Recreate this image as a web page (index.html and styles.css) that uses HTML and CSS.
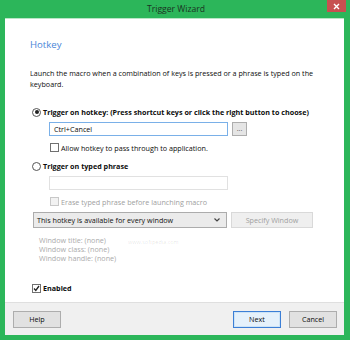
FILE: index.html
```html
<!DOCTYPE html>
<html lang="en">
<head>
  <meta charset="UTF-8">
  <title>Trigger Wizard</title>
  <link rel="stylesheet" href="styles.css">
</head>
<body>
  <div class="window">
    <div class="titlebar">
      <span class="title">Trigger Wizard</span>
      <div class="close">
        <svg width="7" height="7" viewBox="0 0 7 7"><path d="M1 1L6 6M6 1L1 6" stroke="#fff" stroke-width="1.4"/></svg>
      </div>
    </div>

    <div class="content">
      <div class="heading">Hotkey</div>
      <p class="intro">Launch the macro when a combination of keys is pressed or a phrase is typed on the keyboard.</p>

      <!-- Hotkey trigger -->
      <div class="option">
        <span class="radio checked"></span>
        <b>Trigger on hotkey: (Press shortcut keys or click the right button to choose)</b>
      </div>
      <div class="field-row">
        <div class="textbox active">Ctrl+Cancel</div>
        <div class="dots-btn">...</div>
      </div>
      <div class="check-row">
        <span class="checkbox"></span>
        <span>Allow hotkey to pass through to application.</span>
      </div>

      <!-- Typed phrase trigger -->
      <div class="option second">
        <span class="radio"></span>
        <b>Trigger on typed phrase</b>
      </div>
      <div class="field-row second">
        <div class="textbox disabled"></div>
      </div>
      <div class="check-row second disabled-text">
        <span class="checkbox disabled"></span>
        <span>Erase typed phrase before launching macro</span>
      </div>

      <div class="window-row">
        <div class="select">
          <span>This hotkey is available for every window</span>
          <svg width="6" height="4" viewBox="0 0 6 4"><path d="M0.5 0.5L3 3L5.5 0.5" stroke="#444" stroke-width="1.2" fill="none"/></svg>
        </div>
        <div class="btn flat disabled-text">Specify Window</div>
      </div>
      <div class="window-info">
        <div>Window title: (none)</div>
        <div>Window class: (none)</div>
        <div>Window handle: (none)</div>
      </div>

      <div class="enabled-row">
        <span class="checkbox">
          <svg width="7" height="7" viewBox="0 0 7 7"><path d="M1 3.5L2.8 5.5L6 1" stroke="#222" stroke-width="1.3" fill="none"/></svg>
        </span>
        <b>Enabled</b>
      </div>

      <div class="watermark-url">www.softpedia.com</div>
    </div>

    <div class="footer">
      <div class="btn">Help</div>
      <div class="spacer"></div>
      <div class="btn default">Next</div>
      <div class="btn">Cancel</div>
    </div>
  </div>
</body>
</html>
```

FILE: styles.css
```css
* {
  box-sizing: border-box;
}

body {
  margin: 0;
  font-family: "Open Sans", "Liberation Sans", sans-serif;
  font-size: 7.2px;
  color: #0c0c0c;
}

.window {
  width: 350px;
  height: 340px;
  padding: 0 6px 5px 5px;
  background-color: #2cb65a;
  display: flex;
  flex-direction: column;
}

.titlebar {
  height: 18px;
  position: relative;
  display: flex;
  align-items: center;
  justify-content: center;
}

.title {
  font-size: 8.6px;
  color: #1b3322;
  margin-left: 3px;
}

.close {
  position: absolute;
  top: 0;
  right: -2px;
  width: 19px;
  height: 12px;
  background-color: #c75050;
  display: flex;
  align-items: center;
  justify-content: center;
}

.content {
  flex: 1;
  position: relative;
  background-color: #fff;
  border-top: 1px solid #b9e6c6;
  padding: 19px 0 0 25px;
}

.heading {
  font-size: 9.6px;
  color: #4a86d8;
  line-height: 14px;
}

.intro {
  margin: 16px 0 0;
  width: 285px;
  line-height: 11px;
}

.option {
  display: flex;
  align-items: center;
  gap: 2px;
  margin: 17px 0 0 2px;
  height: 10px;
}

.option.second {
  margin-top: 9px;
}

.radio {
  width: 9px;
  height: 9px;
  border: 1px solid #555;
  border-radius: 50%;
  background: #fff;
  position: relative;
}

.radio.checked::after {
  content: "";
  position: absolute;
  left: 1.5px;
  top: 1.5px;
  width: 4px;
  height: 4px;
  border-radius: 50%;
  background: #222;
}

.field-row {
  display: flex;
  gap: 4px;
  margin: 5px 0 0 19px;
}

.field-row.second {
  margin-top: 5px;
}

.textbox {
  width: 179px;
  height: 14px;
  border: 1px solid #d6d6d6;
  padding-left: 4px;
  line-height: 12px;
  background: #fff;
}

.textbox.active {
  border-color: #7ab0e8;
}

.textbox.disabled {
  border-color: #e1e1e1;
}

.dots-btn {
  width: 15px;
  height: 14px;
  border: 1px solid #adadad;
  background: #e5e5e5;
  text-align: center;
  line-height: 10px;
  color: #555;
}

.check-row {
  display: flex;
  align-items: center;
  gap: 2px;
  margin: 7px 0 0 20px;
  height: 9px;
}

.check-row.second {
  margin-top: 7px;
}

.checkbox {
  width: 9px;
  height: 9px;
  border: 1px solid #707070;
  background: #fff;
  display: flex;
  align-items: center;
  justify-content: center;
}

.checkbox.disabled {
  border-color: #c8c8c8;
  background: #f2f2f2;
}

.disabled-text {
  color: #a0a0a0;
}

.window-row {
  display: flex;
  gap: 4px;
  margin: 6px 0 0 3px;
}

.select {
  width: 194px;
  height: 16px;
  border: 1px solid #acacac;
  background: #ebebeb;
  display: flex;
  align-items: center;
  justify-content: space-between;
  padding: 0 6px 0 3px;
  color: #111;
}

.btn {
  width: 82px;
  height: 16px;
  border: 1px solid #adadad;
  background: #e1e1e1;
  display: flex;
  align-items: center;
  justify-content: center;
}

.btn.flat {
  border-color: #d9d9d9;
  background: #efefef;
}

.window-info {
  margin: 8px 0 0 9px;
  line-height: 9px;
  color: #ababab;
}

.enabled-row {
  display: flex;
  align-items: center;
  gap: 2px;
  height: 10px;
  margin: 20px 0 0 2px;
}

.watermark-url {
  position: absolute;
  left: 123px;
  top: 219px;
  font-size: 5.5px;
  color: rgba(0, 0, 0, 0.12);
}

.footer {
  height: 33px;
  background-color: #f0f0f0;
  border-top: 1px solid #dfdfdf;
  display: flex;
  align-items: center;
  padding: 0 7px 0 8px;
  gap: 8px;
}

.footer .btn {
  width: 48px;
  height: 17px;
}

.footer .btn.default {
  border-color: #3c7fd6;
  background: #e5f1fb;
  box-shadow: inset 0 0 0 1px #cde4f7;
}

.spacer {
  flex: 1;
}
```
